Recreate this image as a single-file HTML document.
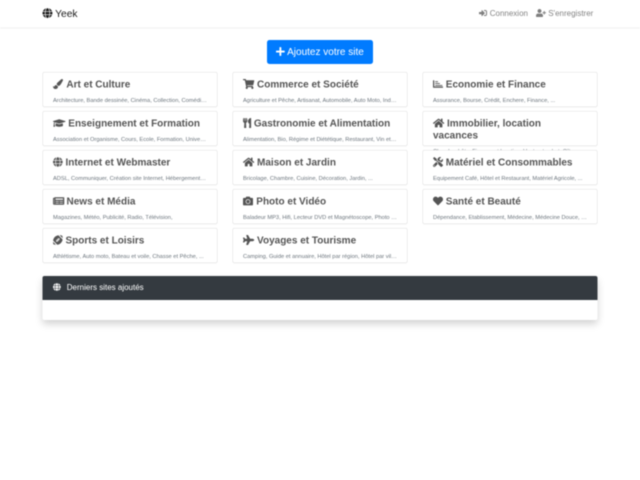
<!DOCTYPE html>
<html lang="fr">
<head>
<meta charset="utf-8">
<title>Yeek</title>
<style>
html,body{margin:0;padding:0;background:#fff;width:640px;height:480px;overflow:hidden}
#blur{position:absolute;left:0;top:0;width:640px;height:480px;overflow:hidden;filter:blur(.42px)}
#page{position:absolute;left:0;top:0;width:1280px;height:960px;transform:scale(.5);transform-origin:0 0;font-family:"Liberation Sans",sans-serif;font-size:16px;line-height:1.5;color:#212529;background:#fff}
svg{fill:currentColor;height:1em;display:inline-block;vertical-align:-.125em;overflow:visible}
#nav{position:absolute;left:0;top:0;width:1280px;height:56px;background:#fff;border-bottom:1px solid #eee;box-shadow:0 1px 3px rgba(0,0,0,.05);box-sizing:border-box}
.brand{position:absolute;left:85px;top:13px;font-size:20.5px;line-height:30px;color:rgba(0,0,0,.9);white-space:nowrap}
.lnk{position:absolute;top:16px;color:rgba(0,0,0,.5);white-space:nowrap;line-height:24px}
.btn{position:absolute;left:534px;top:80px;width:212px;height:48px;background:#007bff;color:#fff;border-radius:5px;font-size:20px;line-height:48px;text-align:center;white-space:nowrap}
.card{position:absolute;width:350px;height:70px;box-sizing:border-box;background:#fff;border:1px solid rgba(0,0,0,.125);border-radius:4px;padding:12px 20px;box-shadow:0 1px 2px rgba(0,0,0,.04)}
.card h5{margin:0 0 12px;font-size:20px;line-height:24px;font-weight:700;color:#555}
.card p{margin:0;font-size:11.4px;line-height:16px;color:#6c757d;white-space:nowrap;overflow:hidden;text-overflow:ellipsis}
.c1{left:85px}.c2{left:465px}.c3{left:845px}
.r1{top:144px}.r2{top:222px}.r3{top:300px}.r4{top:378px}.r5{top:456px}
#last{position:absolute;left:85px;top:552px;width:1110px;height:88px;background:#fff;border-radius:4px;box-shadow:0 8px 16px rgba(0,0,0,.18)}
#last div{height:48px;background:#343a40;color:#fff;border-radius:4px 4px 0 0;line-height:48px;padding-left:21px;box-sizing:border-box;white-space:nowrap}
</style>
</head>
<body>
<div id="blur">
<div id="page">

<div id="nav">
  <div class="brand"><svg viewBox="0 0 496 512"><path d="M336.5 160C322 70.7 287.8 8 248 8s-74 62.7-88.5 152h177zM152 256c0 22.2 1.2 43.5 3.3 64h185.3c2.1-20.5 3.3-41.8 3.3-64s-1.2-43.5-3.3-64H155.3c-2.1 20.5-3.3 41.8-3.3 64zm324.7-96c-28.6-67.9-86.5-120.4-158-141.6 24.4 33.8 41.2 84.7 50 141.6h108zM177.2 18.4C105.8 39.6 47.8 92.1 19.3 160h108c8.7-56.9 25.5-107.8 49.9-141.6zM487.4 192H372.7c2.1 21 3.3 42.5 3.3 64s-1.2 43-3.3 64h114.6c5.5-20.5 8.6-41.8 8.6-64s-3.1-43.5-8.5-64zM120 256c0-21.5 1.2-43 3.3-64H8.6C3.2 212.5 0 233.8 0 256s3.2 43.5 8.6 64h114.6c-2-21-3.2-42.5-3.2-64zm39.5 96c14.5 89.3 48.7 152 88.5 152s74-62.7 88.5-152h-177zm159.3 141.6c71.4-21.2 129.4-73.7 158-141.6h-108c-8.8 56.9-25.6 107.8-50 141.6zM19.3 352c28.6 67.9 86.5 120.4 158 141.6-24.4-33.8-41.2-84.7-50-141.6h-108z"/></svg> Yeek</div>
  <div class="lnk" style="left:958px"><svg viewBox="0 0 512 512"><path d="M416 448h-84c-6.6 0-12-5.4-12-12v-40c0-6.6 5.4-12 12-12h84c17.7 0 32-14.3 32-32V160c0-17.7-14.3-32-32-32h-84c-6.6 0-12-5.4-12-12V76c0-6.6 5.4-12 12-12h84c53 0 96 43 96 96v192c0 53-43 96-96 96zm-47-201L201 79c-15-15-41-4.5-41 17v96H24c-13.3 0-24 10.7-24 24v96c0 13.3 10.7 24 24 24h136v96c0 21.5 26 32 41 17l168-168c9.3-9.4 9.3-24.6 0-34z"/></svg><span style="margin-left:1px"> Connexion</span></div>
  <div class="lnk" style="left:1072px"><svg viewBox="0 0 640 512"><path d="M624 208h-64v-64c0-8.8-7.2-16-16-16h-32c-8.8 0-16 7.2-16 16v64h-64c-8.8 0-16 7.2-16 16v32c0 8.8 7.2 16 16 16h64v64c0 8.8 7.2 16 16 16h32c8.8 0 16-7.2 16-16v-64h64c8.8 0 16-7.2 16-16v-32c0-8.8-7.2-16-16-16zm-400 48c70.7 0 128-57.3 128-128S294.7 0 224 0 96 57.3 96 128s57.3 128 128 128zm89.6 32h-16.7c-22.2 10.2-46.9 16-72.9 16s-50.6-5.8-72.9-16h-16.7C60.2 288 0 348.2 0 422.4V464c0 26.5 21.5 48 48 48h352c26.5 0 48-21.5 48-48v-41.6c0-74.2-60.2-134.4-134.4-134.4z"/></svg> S'enregistrer</div>
</div>

<div class="btn"><svg viewBox="0 0 448 512"><path d="M416 208H272V64c0-17.67-14.33-32-32-32h-32c-17.67 0-32 14.33-32 32v144H32c-17.67 0-32 14.33-32 32v32c0 17.67 14.33 32 32 32h144v144c0 17.67 14.33 32 32 32h32c17.67 0 32-14.33 32-32V304h144c17.67 0 32-14.33 32-32v-32c0-17.67-14.33-32-32-32z"/></svg> Ajoutez votre site</div>

<div class="card c1 r1"><h5><svg viewBox="0 0 512 512" style="margin-right:2px"><path d="M167.02 309.34c-40.12 2.58-76.53 17.86-97.19 72.3-2.35 6.21-8 9.98-14.59 9.98-11.11 0-45.46-27.67-55.25-34.35C0 439.62 37.93 512 128 512c75.86 0 128-43.77 128-120.19 0-3.11-.65-6.08-.97-9.13l-88.01-73.34zM457.89 0c-15.16 0-29.37 6.71-40.21 16.45C213.27 199.05 192 203.34 192 257.09c0 13.7 3.25 26.76 8.73 38.7l63.82 53.18c7.21 1.8 14.64 3.03 22.39 3.03 62.11 0 98.11-45.47 211.16-256.46 7.38-14.35 13.9-29.85 13.9-45.99C512 20.64 486 0 457.89 0z"/></svg> Art et Culture</h5><p>Architecture, Bande dessinée, Cinéma, Collection, Comédie musicale</p></div>

<div class="card c2 r1"><h5><svg viewBox="0 0 576 512"><path d="M528.12 301.319l47.273-208C578.806 78.301 567.391 64 551.99 64H159.208l-9.166-44.81C147.758 8.021 137.93 0 126.529 0H24C10.745 0 0 10.745 0 24v16c0 13.255 10.745 24 24 24h69.883l70.248 343.435C147.325 417.1 136 435.222 136 456c0 30.928 25.072 56 56 56s56-25.072 56-56c0-15.674-6.447-29.835-16.824-40h209.647C430.447 426.165 424 440.326 424 456c0 30.928 25.072 56 56 56s56-25.072 56-56c0-22.172-12.888-41.332-31.579-50.405l5.517-24.276c3.413-15.018-8.002-29.319-23.403-29.319H218.117l-6.545-32h293.145c11.206 0 20.92-7.754 23.403-18.681z"/></svg> Commerce et Société</h5><p>Agriculture et Pêche, Artisanat, Automobile, Auto Moto, Industrie et Services</p></div>

<div class="card c3 r1"><h5><svg viewBox="0 0 512 512"><path d="M496 384H64V80c0-8.84-7.16-16-16-16H16C7.16 64 0 71.16 0 80v336c0 17.67 14.33 32 32 32h464c8.84 0 16-7.16 16-16v-32c0-8.84-7.16-16-16-16zM112 112h144v48H112zM112 208h240v48H112zM112 304h368v48H112z"/></svg> Economie et Finance</h5><p>Assurance, Bourse, Crédit, Enchere, Finance, ...</p></div>

<div class="card c1 r2"><h5><svg viewBox="0 0 640 512"><path d="M622.34 153.2L343.4 67.5c-15.2-4.67-31.6-4.67-46.79 0L17.66 153.2c-23.54 7.23-23.54 38.36 0 45.59l48.63 14.94c-10.67 13.19-17.23 29.28-17.88 46.9C38.78 266.15 32 276.11 32 288c0 10.78 5.68 19.85 13.86 25.65L20.33 428.53C18.11 438.52 25.71 448 35.94 448h56.11c10.24 0 17.84-9.48 15.62-19.47L82.14 313.65C90.32 307.85 96 298.78 96 288c0-11.57-6.47-21.25-15.66-26.87.76-15.02 8.44-28.3 20.69-36.72L296.6 284.5c9.06 2.78 26.44 6.25 46.79 0l278.95-85.7c23.55-7.24 23.55-38.36 0-45.6zM352.79 315.09c-28.53 8.76-52.84 3.92-65.59 0l-145.02-44.55L128 384c0 35.35 85.96 64 192 64s192-28.65 192-64l-14.18-113.47-145.03 44.56z"/></svg> Enseignement et Formation</h5><p>Association et Organisme, Cours, Ecole, Formation, Université et Recherche</p></div>

<div class="card c2 r2"><h5><svg viewBox="0 0 416 512"><path d="M207.9 15.2c.8 4.7 16.1 94.5 16.1 128.8 0 52.3-27.8 89.6-68.9 104.6L168 486.7c.7 13.7-10.2 25.3-24 25.3H80c-13.7 0-24.7-11.5-24-25.3l12.9-238.1C27.7 233.6 0 196.2 0 144 0 109.6 15.3 19.9 16.1 15.2 19.3-5.1 61.4-5.4 64 16.3v141.2c1.3 3.4 15.1 3.2 16 0 1.4-25.3 7.9-139.2 8-141.8 3.3-20.8 44.7-20.8 47.9 0 .2 2.7 6.6 116.5 8 141.8.9 3.2 14.8 3.4 16 0V16.3c2.6-21.6 44.8-21.4 48-1.1zm119.2 285.7l-15 185.1c-1.2 14 9.9 26 23.9 26h56c13.3 0 24-10.7 24-24V24c0-13.2-10.7-24-24-24-82.5 0-221.4 178.5-64.9 300.9z"/></svg> Gastronomie et Alimentation</h5><p>Alimentation, Bio, Régime et Diététique, Restaurant, Vin et Alcool, Produits</p></div>

<div class="card c3 r2"><h5><svg viewBox="0 0 576 512"><path d="M280.37 148.26L96 300.11V464a16 16 0 0 0 16 16l112.06-.29a16 16 0 0 0 15.92-16V368a16 16 0 0 1 16-16h64a16 16 0 0 1 16 16v95.64a16 16 0 0 0 16 16.05L464 480a16 16 0 0 0 16-16V300L295.67 148.26a12.19 12.19 0 0 0-15.3 0zM571.6 251.47L488 182.56V44.05a12 12 0 0 0-12-12h-56a12 12 0 0 0-12 12v72.61L318.47 43a48 48 0 0 0-61 0L4.34 251.47a12 12 0 0 0-1.6 16.9l25.5 31A12 12 0 0 0 45.15 301l235.22-193.74a12.19 12.19 0 0 1 15.3 0L530.9 301a12 12 0 0 0 16.9-1.6l25.5-31a12 12 0 0 0-1.7-16.93z"/></svg> Immobilier, location vacances</h5><p>Chambre hôte, Finance et location, Vente et achat, Gîtes</p></div>

<div class="card c1 r3"><h5><svg viewBox="0 0 496 512"><path d="M336.5 160C322 70.7 287.8 8 248 8s-74 62.7-88.5 152h177zM152 256c0 22.2 1.2 43.5 3.3 64h185.3c2.1-20.5 3.3-41.8 3.3-64s-1.2-43.5-3.3-64H155.3c-2.1 20.5-3.3 41.8-3.3 64zm324.7-96c-28.6-67.9-86.5-120.4-158-141.6 24.4 33.8 41.2 84.7 50 141.6h108zM177.2 18.4C105.8 39.6 47.8 92.1 19.3 160h108c8.7-56.9 25.5-107.8 49.9-141.6zM487.4 192H372.7c2.1 21 3.3 42.5 3.3 64s-1.2 43-3.3 64h114.6c5.5-20.5 8.6-41.8 8.6-64s-3.1-43.5-8.5-64zM120 256c0-21.5 1.2-43 3.3-64H8.6C3.2 212.5 0 233.8 0 256s3.2 43.5 8.6 64h114.6c-2-21-3.2-42.5-3.2-64zm39.5 96c14.5 89.3 48.7 152 88.5 152s74-62.7 88.5-152h-177zm159.3 141.6c71.4-21.2 129.4-73.7 158-141.6h-108c-8.8 56.9-25.6 107.8-50 141.6zM19.3 352c28.6 67.9 86.5 120.4 158 141.6-24.4-33.8-41.2-84.7-50-141.6h-108z"/></svg> Internet et Webmaster</h5><p>ADSL, Communiquer, Création site Internet, Hébergement Web, Référencement</p></div>

<div class="card c2 r3"><h5><svg viewBox="0 0 576 512"><path d="M280.37 148.26L96 300.11V464a16 16 0 0 0 16 16l112.06-.29a16 16 0 0 0 15.92-16V368a16 16 0 0 1 16-16h64a16 16 0 0 1 16 16v95.64a16 16 0 0 0 16 16.05L464 480a16 16 0 0 0 16-16V300L295.67 148.26a12.19 12.19 0 0 0-15.3 0zM571.6 251.47L488 182.56V44.05a12 12 0 0 0-12-12h-56a12 12 0 0 0-12 12v72.61L318.47 43a48 48 0 0 0-61 0L4.34 251.47a12 12 0 0 0-1.6 16.9l25.5 31A12 12 0 0 0 45.15 301l235.22-193.74a12.19 12.19 0 0 1 15.3 0L530.9 301a12 12 0 0 0 16.9-1.6l25.5-31a12 12 0 0 0-1.7-16.93z"/></svg> Maison et Jardin</h5><p>Bricolage, Chambre, Cuisine, Décoration, Jardin, ...</p></div>

<div class="card c3 r3"><h5><svg viewBox="0 0 512 512"><path d="M501.1 395.7L384 278.6c-23.1-23.1-57.6-27.6-85.4-13.9L192 158.1V96L64 0 0 64l96 128h62.1l106.6 106.6c-13.6 27.8-9.2 62.3 13.9 85.4l117.1 117.1c14.6 14.6 38.2 14.6 52.7 0l52.7-52.7c14.5-14.6 14.5-38.2 0-52.7zM331.7 225c28.3 0 54.9 11 74.9 31l19.4 19.4c15.8-6.9 30.8-16.5 43.8-29.5 37.1-37.1 49.7-89.3 37.9-136.7-2.2-9-13.5-12.1-20.1-5.5l-74.4 74.4-67.9-11.3L334 98.9l74.4-74.4c6.6-6.6 3.4-17.9-5.7-20.2-47.4-11.7-99.6.9-136.6 37.9-28.5 28.5-41.9 66.1-41.2 103.6l82.1 82.1c8.1-1.9 16.5-2.9 24.7-2.9zm-103.9 82l-56.7-56.7L18.7 402.8c-25 25-25 65.5 0 90.5s65.5 25 90.5 0l123.6-123.6c-7.6-19.9-9.9-41.6-5-62.7zM64 472c-13.2 0-24-10.8-24-24 0-13.3 10.7-24 24-24s24 10.7 24 24c0 13.2-10.7 24-24 24z"/></svg> Matériel et Consommables</h5><p>Equipement Café, Hôtel et Restaurant, Matériel Agricole, ...</p></div>

<div class="card c1 r4"><h5><svg viewBox="0 0 576 512" style="margin-right:-1px"><path d="M552 64H88c-13.255 0-24 10.745-24 24v8H24c-13.255 0-24 10.745-24 24v272c0 30.928 25.072 56 56 56h472c26.51 0 48-21.49 48-48V88c0-13.255-10.745-24-24-24zM56 400a8 8 0 0 1-8-8V144h16v248a8 8 0 0 1-8 8zm236-16H140c-6.627 0-12-5.373-12-12v-8c0-6.627 5.373-12 12-12h152c6.627 0 12 5.373 12 12v8c0 6.627-5.373 12-12 12zm208 0H348c-6.627 0-12-5.373-12-12v-8c0-6.627 5.373-12 12-12h152c6.627 0 12 5.373 12 12v8c0 6.627-5.373 12-12 12zm-208-96H140c-6.627 0-12-5.373-12-12v-8c0-6.627 5.373-12 12-12h152c6.627 0 12 5.373 12 12v8c0 6.627-5.373 12-12 12zm208 0H348c-6.627 0-12-5.373-12-12v-8c0-6.627 5.373-12 12-12h152c6.627 0 12 5.373 12 12v8c0 6.627-5.373 12-12 12zm0-96H140c-6.627 0-12-5.373-12-12v-40c0-6.627 5.373-12 12-12h360c6.627 0 12 5.373 12 12v40c0 6.627-5.373 12-12 12z"/></svg> News et Média</h5><p>Magazines, Météo, Publicité, Radio, Télévision,</p></div>

<div class="card c2 r4"><h5><svg viewBox="0 0 512 512" style="margin-right:1px"><path d="M512 144v288c0 26.5-21.5 48-48 48H48c-26.5 0-48-21.5-48-48V144c0-26.5 21.5-48 48-48h88l12.3-32.9c7-18.7 24.9-31.1 44.9-31.1h125.5c20 0 37.9 12.4 44.9 31.1L376 96h88c26.5 0 48 21.5 48 48zM376 288c0-66.2-53.8-120-120-120s-120 53.8-120 120 53.8 120 120 120 120-53.8 120-120zm-32 0c0 48.5-39.5 88-88 88s-88-39.5-88-88 39.5-88 88-88 88 39.5 88 88z"/></svg> Photo et Vidéo</h5><p>Baladeur MP3, Hifi, Lecteur DVD et Magnétoscope, Photo Numérique, Vidéo</p></div>

<div class="card c3 r4"><h5><svg viewBox="0 0 512 512"><path d="M462.3 62.6C407.5 15.9 326 24.3 275.7 76.2L256 96.5l-19.7-20.3C186.1 24.3 104.5 15.9 49.7 62.6c-62.8 53.6-66.1 149.8-9.9 207.9l193.5 199.8c12.5 12.9 32.8 12.9 45.3 0l193.5-199.8c56.3-58.1 53-154.3-9.8-207.9z"/></svg> Santé et Beauté</h5><p>Dépendance, Etablissement, Médecine, Médecine Douce, Santé et Bien-être</p></div>

<div class="card c1 r5"><h5><svg viewBox="0 0 496 512"><path d="M481.5 60.3c-4.8-18.2-19.1-32.5-37.3-37.4C420.3 16.5 383 8.9 339.4 8L496 164.8c-.8-43.5-8.2-80.6-14.5-104.5zm-467 391.4c4.8 18.2 19.1 32.5 37.3 37.4 23.9 6.4 61.2 14 104.8 14.9L0 347.2c.8 43.5 8.2 80.6 14.5 104.5zM4.2 283.4L220.4 500c132.5-19.4 248.8-118.7 271.5-271.4L275.6 12C143.1 31.4 26.8 130.7 4.2 283.4zm317.3-123.6c3.1-3.1 8.2-3.1 11.3 0l11.3 11.3c3.1 3.1 3.1 8.2 0 11.3l-28.3 28.3 28.3 28.3c3.1 3.1 3.1 8.2 0 11.3l-11.3 11.3c-3.1 3.1-8.2 3.1-11.3 0l-28.3-28.3-22.6 22.7 28.3 28.3c3.1 3.1 3.1 8.2 0 11.3l-11.3 11.3c-3.1 3.1-8.2 3.1-11.3 0L248 278.6l-22.6 22.6 28.3 28.3c3.1 3.1 3.1 8.2 0 11.3l-11.3 11.3c-3.1 3.1-8.2 3.1-11.3 0l-28.3-28.3-28.3 28.3c-3.1 3.1-8.2 3.1-11.3 0l-11.3-11.3c-3.1-3.1-3.1-8.2 0-11.3l28.3-28.3-28.3-28.2c-3.1-3.1-3.1-8.2 0-11.3l11.3-11.3c3.1-3.1 8.2-3.1 11.3 0l28.3 28.3 22.6-22.6-28.3-28.3c-3.1-3.1-3.1-8.2 0-11.3l11.3-11.3c3.1-3.1 8.2-3.1 11.3 0l28.3 28.3 22.6-22.6-28.3-28.3c-3.1-3.1-3.1-8.2 0-11.3l11.3-11.3c3.1-3.1 8.2-3.1 11.3 0l28.3 28.3 28.3-28.5z"/></svg> Sports et Loisirs</h5><p>Athlétisme, Auto moto, Bateau et voile, Chasse et Pêche, ...</p></div>

<div class="card c2 r5"><h5><svg viewBox="0 0 576 512"><path d="M480 192H365.71L260.61 8.06A16.014 16.014 0 0 0 246.71 0h-65.5c-10.63 0-18.3 10.17-15.38 20.39L214.86 192H112l-43.2-57.6c-3.02-4.03-7.77-6.4-12.8-6.4H16.01C5.6 128-2.04 137.78.49 147.88L32 256 .49 364.12C-2.04 374.22 5.6 384 16.01 384H56c5.04 0 9.78-2.37 12.8-6.4L112 320h102.86l-49.03 171.6c-2.92 10.22 4.75 20.4 15.38 20.4h65.5c5.74 0 11.04-3.08 13.89-8.06L365.71 320H480c35.35 0 96-28.65 96-64s-60.65-64-96-64z"/></svg> Voyages et Tourisme</h5><p>Camping, Guide et annuaire, Hôtel par région, Hôtel par ville, Location</p></div>

<div id="last"><div><svg viewBox="0 0 496 512"><path d="M336.5 160C322 70.7 287.8 8 248 8s-74 62.7-88.5 152h177zM152 256c0 22.2 1.2 43.5 3.3 64h185.3c2.1-20.5 3.3-41.8 3.3-64s-1.2-43.5-3.3-64H155.3c-2.1 20.5-3.3 41.8-3.3 64zm324.7-96c-28.6-67.9-86.5-120.4-158-141.6 24.4 33.8 41.2 84.7 50 141.6h108zM177.2 18.4C105.8 39.6 47.8 92.1 19.3 160h108c8.7-56.9 25.5-107.8 49.9-141.6zM487.4 192H372.7c2.1 21 3.3 42.5 3.3 64s-1.2 43-3.3 64h114.6c5.5-20.5 8.6-41.8 8.6-64s-3.1-43.5-8.5-64zM120 256c0-21.5 1.2-43 3.3-64H8.6C3.2 212.5 0 233.8 0 256s3.2 43.5 8.6 64h114.6c-2-21-3.2-42.5-3.2-64zm39.5 96c14.5 89.3 48.7 152 88.5 152s74-62.7 88.5-152h-177zm159.3 141.6c71.4-21.2 129.4-73.7 158-141.6h-108c-8.8 56.9-25.6 107.8-50 141.6zM19.3 352c28.6 67.9 86.5 120.4 158 141.6-24.4-33.8-41.2-84.7-50-141.6h-108z"/></svg><span style="margin-left:12px">Derniers sites ajoutés</span></div></div>

</div>
</div>
</body>
</html>
